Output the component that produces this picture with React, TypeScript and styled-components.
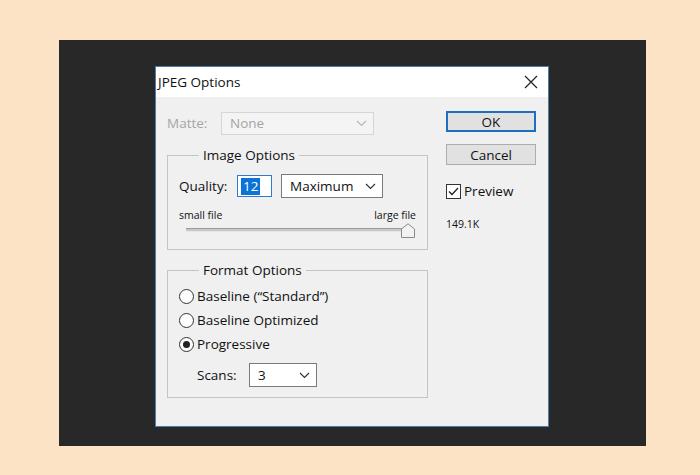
import styled, { createGlobalStyle } from "styled-components";

const GlobalStyle = createGlobalStyle`
  html, body {
    margin: 0;
    padding: 0;
    background: #fde3c6;
  }
  body {
    font-family: "Open Sans", "Noto Sans", sans-serif;
    color: #111;
  }
`;

const Page = styled.div`
  width: 700px;
  height: 475px;
  box-sizing: border-box;
  padding: 40px 0 0 59px;
`;

const Backdrop = styled.div`
  width: 587px;
  height: 406px;
  box-sizing: border-box;
  padding: 26px 0 0 96px;
  background: #282828;
`;

const Dialog = styled.div`
  width: 394px;
  height: 361px;
  box-sizing: border-box;
  border: 1px solid #4a7db0;
  background: #f0f0f0;
  display: flex;
  flex-direction: column;
`;

const TitleBar = styled.div`
  height: 30px;
  background: #fff;
  display: flex;
  align-items: center;
  justify-content: space-between;
  padding: 0 10px 0 2px;
  font-size: 13.5px;
`;

const Body = styled.div`
  display: flex;
  gap: 18px;
  padding: 14px 0 0 11px;
`;

const LeftCol = styled.div`
  width: 261px;
  display: flex;
  flex-direction: column;
`;

const RightCol = styled.div`
  width: 90px;
  display: flex;
  flex-direction: column;
`;

const Row = styled.div<{ $indent?: number }>`
  display: flex;
  align-items: center;
  height: 24px;
  padding-left: ${(p) => p.$indent ?? 0}px;
  font-size: 13.5px;
`;

const Label = styled.span<{ $width: number; $disabled?: boolean }>`
  width: ${(p) => p.$width}px;
  color: ${(p) => (p.$disabled ? "#a5a5a5" : "#111")};
`;

const Select = styled.div<{ $width: number; $disabled?: boolean }>`
  width: ${(p) => p.$width}px;
  height: ${(p) => (p.$disabled ? 23 : 24)}px;
  box-sizing: border-box;
  border: 1px solid ${(p) => (p.$disabled ? "#d6d6d6" : "#7a7a7a")};
  background: ${(p) => (p.$disabled ? "#f4f4f4" : "#fff")};
  color: ${(p) => (p.$disabled ? "#a5a5a5" : "#111")};
  display: flex;
  align-items: center;
  justify-content: space-between;
  padding: 0 6px 0 8px;
  font-size: 13.5px;
`;

const Chevron = styled.svg<{ $disabled?: boolean }>`
  width: 11px;
  height: 7px;
  stroke: ${(p) => (p.$disabled ? "#b8b8b8" : "#333")};
  fill: none;
  stroke-width: 1.2;
`;

const Group = styled.fieldset<{ $top: number; $pb: number }>`
  margin: ${(p) => p.$top}px 0 0 0;
  padding: 0 11px ${(p) => p.$pb}px 11px;
  border: 1px solid #c4c4c4;
  min-width: 0;
`;

const Legend = styled.legend`
  margin-left: 20px;
  padding: 0 4px;
  line-height: 18px;
  font-size: 13.5px;
`;

const QualityInput = styled.div`
  width: 35px;
  height: 22px;
  box-sizing: border-box;
  border: 1px solid #2f7ad0;
  background: #fff;
  display: flex;
  align-items: center;
  padding-left: 3px;
  margin-right: 9px;
`;

const Selected = styled.span`
  background: #0a74d8;
  color: #fff;
  line-height: 17px;
  padding: 0 2px;
`;

const SliderLabels = styled.div`
  display: flex;
  justify-content: space-between;
  margin-top: 10px;
  font-size: 10.5px;
  line-height: 14px;
`;

const SliderTrack = styled.div`
  position: relative;
  height: 16px;
  margin: 0 3px 0 7px;
  display: flex;
  align-items: center;
`;

const TrackLine = styled.div`
  flex: 1;
  height: 4px;
  box-sizing: border-box;
  border-top: 1px solid #9a9a9a;
  background: #c8c8c8;
  border-bottom: 1px solid #e6e6e6;
`;

const Thumb = styled.svg`
  position: absolute;
  right: -2px;
  top: 1px;
  width: 14px;
  height: 15px;
`;

const RadioList = styled.div`
  padding-top: 5px;
`;

const RadioCircle = styled.span<{ $checked?: boolean }>`
  width: 15px;
  height: 15px;
  box-sizing: border-box;
  border-radius: 50%;
  border: 1px solid #333;
  background: #fff;
  margin-right: 3px;
  display: flex;
  align-items: center;
  justify-content: center;
  &::after {
    content: "";
    width: 7px;
    height: 7px;
    border-radius: 50%;
    background: ${(p) => (p.$checked ? "#222" : "transparent")};
  }
`;

const Button = styled.div<{ $default?: boolean; $top: number }>`
  height: 21px;
  margin-top: ${(p) => p.$top}px;
  box-sizing: border-box;
  border: ${(p) => (p.$default ? "2px solid #1e6fbf" : "1px solid #adadad")};
  background: #e1e1e1;
  display: flex;
  align-items: center;
  justify-content: center;
  font-size: 13.5px;
`;

const CheckRow = styled.div`
  display: flex;
  align-items: center;
  height: 16px;
  margin-top: 18px;
  font-size: 13.5px;
`;

const CheckBox = styled.span`
  width: 15px;
  height: 15px;
  box-sizing: border-box;
  border: 1px solid #333;
  background: #fff;
  margin-right: 3px;
  display: flex;
  align-items: center;
  justify-content: center;
`;

const SizeInfo = styled.div`
  margin-top: 18px;
  font-size: 10.5px;
  line-height: 14px;
`;

const ChevronIcon = ({ disabled }: { disabled?: boolean }) => (
  <Chevron $disabled={disabled} viewBox="0 0 11 7">
    <polyline points="1,1 5.5,5.5 10,1" />
  </Chevron>
);

const radios = [
  { label: "Baseline (“Standard”)", checked: false },
  { label: "Baseline Optimized", checked: false },
  { label: "Progressive", checked: true },
];

export default function App() {
  return (
    <>
      <GlobalStyle />
      <Page>
        <Backdrop>
          <Dialog>
            <TitleBar>
              <span>JPEG Options</span>
              <svg width="14" height="14" viewBox="0 0 14 14">
                <path d="M1 1 L13 13 M13 1 L1 13" stroke="#222" strokeWidth="1.2" />
              </svg>
            </TitleBar>
            <Body>
              <LeftCol>
                <Row>
                  <Label $width={54} $disabled>
                    Matte:
                  </Label>
                  <Select $width={153} $disabled>
                    None
                    <ChevronIcon disabled />
                  </Select>
                </Row>

                <Group $top={11} $pb={11}>
                  <Legend>Image Options</Legend>
                  <Row style={{ marginTop: 10 }}>
                    <Label $width={58}>Quality:</Label>
                    <QualityInput>
                      <Selected>12</Selected>
                    </QualityInput>
                    <Select $width={102}>
                      Maximum
                      <ChevronIcon />
                    </Select>
                  </Row>
                  <SliderLabels>
                    <span>small file</span>
                    <span>large file</span>
                  </SliderLabels>
                  <SliderTrack>
                    <TrackLine />
                    <Thumb viewBox="0 0 14 15">
                      <path
                        d="M0.5 14.5 L0.5 6 L7 0.8 L13.5 6 L13.5 14.5 Z"
                        fill="#f2f2f2"
                        stroke="#8a8a8a"
                      />
                    </Thumb>
                  </SliderTrack>
                </Group>

                <Group $top={11} $pb={10}>
                  <Legend>Format Options</Legend>
                  <RadioList>
                    {radios.map((r) => (
                      <Row key={r.label}>
                        <RadioCircle $checked={r.checked} />
                        {r.label}
                      </Row>
                    ))}
                  </RadioList>
                  <Row $indent={18} style={{ marginTop: 7 }}>
                    <Label $width={52}>Scans:</Label>
                    <Select $width={68}>
                      3
                      <ChevronIcon />
                    </Select>
                  </Row>
                </Group>
              </LeftCol>

              <RightCol>
                <Button $default $top={0}>
                  OK
                </Button>
                <Button $top={12}>Cancel</Button>
                <CheckRow>
                  <CheckBox>
                    <svg width="11" height="9" viewBox="0 0 11 9">
                      <polyline
                        points="1,4.5 4,7.5 10,1"
                        fill="none"
                        stroke="#222"
                        strokeWidth="1.3"
                      />
                    </svg>
                  </CheckBox>
                  Preview
                </CheckRow>
                <SizeInfo>149.1K</SizeInfo>
              </RightCol>
            </Body>
          </Dialog>
        </Backdrop>
      </Page>
    </>
  );
}
